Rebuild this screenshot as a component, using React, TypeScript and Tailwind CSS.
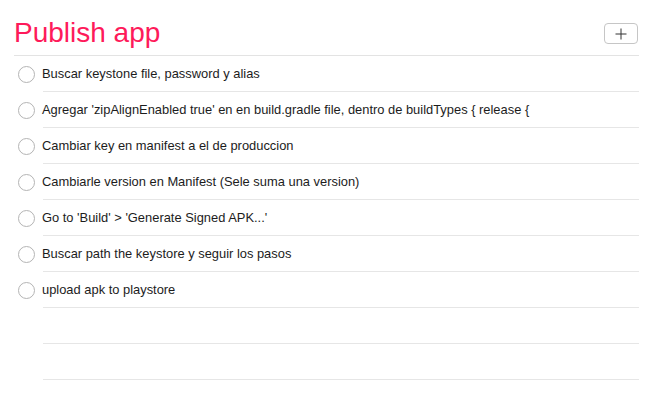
import React from "react";

const items = [
  "Buscar keystone file, password y alias",
  "Agregar 'zipAlignEnabled true' en en build.gradle file, dentro de buildTypes { release {",
  "Cambiar key en manifest a el de produccion",
  "Cambiarle version en Manifest (Sele suma una version)",
  "Go to 'Build' > 'Generate Signed APK...'",
  "Buscar path the keystore y seguir los pasos",
  "upload apk to playstore",
];

export default function App() {
  return (
    <div
      className="w-[649px] h-[401px] bg-white pl-[14px] pr-[10px] overflow-hidden"
      style={{ fontFamily: '"Liberation Sans", Arial, sans-serif' }}
    >
      <div className="flex justify-between items-start h-[56px] border-b border-[#e3e3e3]">
        <div className="pt-[17px] text-[28px] leading-[32px] text-[#fe1a5a]">Publish app</div>
        <button className="mt-[23px] mr-[1px] w-[34px] h-[21px] rounded-[4px] border border-[#c6c6c6] bg-white flex items-center justify-center">
          <svg width="12" height="12" viewBox="0 0 12 12">
            <path d="M6 0.5V11.5M0.5 6H11.5" stroke="#333" strokeWidth="1" />
          </svg>
        </button>
      </div>
      {items.map((t, i) => (
        <div key={i} className="flex h-[36px]">
          <div className="ml-[4px] mt-[10px] w-[17px] h-[17px] rounded-full border border-[#b4b4b4] shrink-0" />
          <div className="ml-[8px] flex-1 border-b border-[#e6e6e6] h-[36px]">
            <div className="-ml-[1px] text-[12.9px] leading-[35px] text-[#1c1c1c] whitespace-nowrap">{t}</div>
          </div>
        </div>
      ))}
      {[0, 1].map((i) => (
        <div key={"e" + i} className="flex h-[36px]">
          <div className="ml-[29px] flex-1 border-b border-[#e6e6e6] h-[36px]" />
        </div>
      ))}
    </div>
  );
}
